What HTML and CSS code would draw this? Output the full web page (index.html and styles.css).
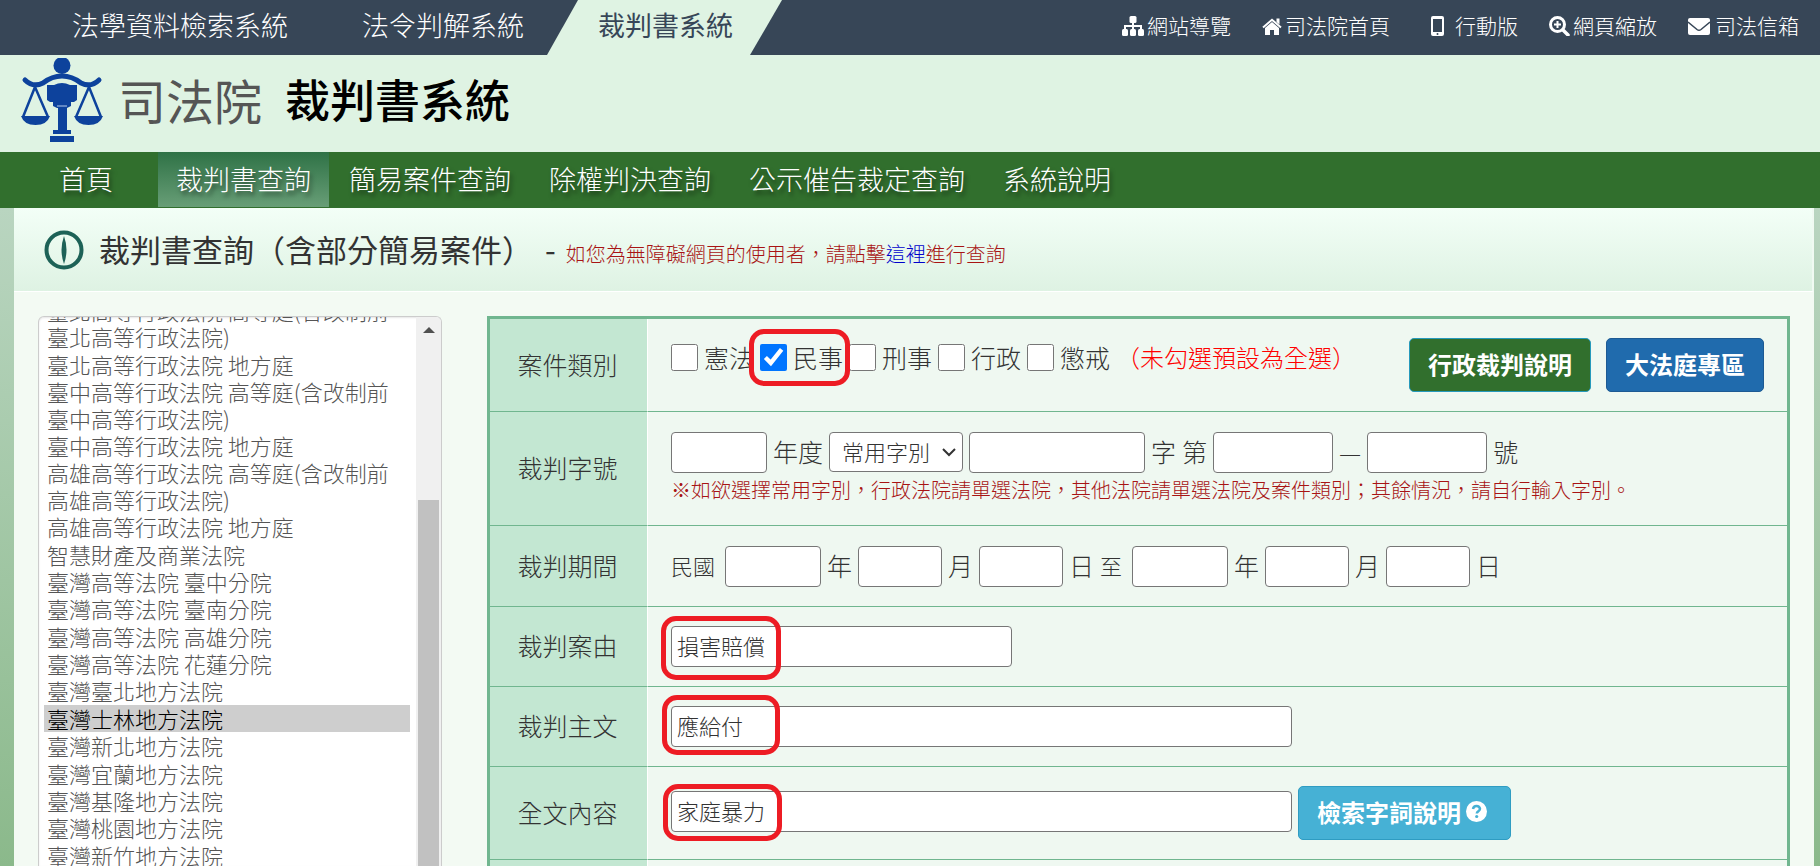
FILE: index.html
```html
<!DOCTYPE html>
<html lang="zh-Hant">
<head>
<meta charset="utf-8">
<title>裁判書系統</title>
<link rel="stylesheet" href="styles.css">
</head>
<body>
<header>
  <div class="topbar">
    <nav class="systems">
      <a href="#">法學資料檢索系統</a>
      <a href="#">法令判解系統</a>
      <a href="#" class="current">裁判書系統</a>
    </nav>
    <nav class="tools">
      <a href="#"><svg width="22" height="20" viewBox="0 0 22 20" fill="#fff"><rect x="7.500" y="0" width="7" height="7" rx="1.500"/><rect x="0" y="13" width="6" height="7" rx="1.500"/><rect x="8" y="13" width="6" height="7" rx="1.500"/><rect x="16" y="13" width="6" height="7" rx="1.500"/><path d="M3 14v-4h16v4M11 6v8" fill="none" stroke="#fff" stroke-width="2"/></svg><span>網站導覽</span></a>
      <a href="#"><svg width="20" height="17" viewBox="0 0 20 17" fill="#fff"><path d="M10 4 17 10v7h-5v-5H8v5H3v-7z"/><path d="M1 9.500 10 1.800l9 7.700" fill="none" stroke="#fff" stroke-width="2"/><path d="M14.500 0.500h3v6l-3-2.500z"/></svg><span>司法院首頁</span></a>
      <a href="#" class="mobile"><svg width="13" height="20" viewBox="0 0 13 20"><path fill="#fff" fill-rule="evenodd" d="M2 0h9a2 2 0 0 1 2 2v16a2 2 0 0 1-2 2H2a2 2 0 0 1-2-2V2a2 2 0 0 1 2-2zM2 3v13h9V3zM6.500 17a1 1 0 1 0 0 2 1 1 0 0 0 0-2z"/></svg><span>行動版</span></a>
      <a href="#"><svg width="21" height="20" viewBox="0 0 21 20" fill="none" stroke="#fff"><circle cx="8.500" cy="8.500" r="7" stroke-width="3"/><path d="M8.500 5v7M5 8.500h7" stroke-width="2"/><path d="m14 14 5 5" stroke-width="3.500" stroke-linecap="round"/></svg><span>網頁縮放</span></a>
      <a href="#" class="mail"><svg width="22" height="17" viewBox="0 0 22 17"><rect width="22" height="17" rx="2" fill="#fff"/><path d="m0 4 9 7.500q2 1.500 4 0L22 4" fill="none" stroke="#374657" stroke-width="1.500"/></svg><span>司法信箱</span></a>
    </nav>
  </div>
  <div class="brand">
    <svg class="emblem" width="82" height="84" viewBox="0 0 82 84" fill="#0d429c">
      <ellipse cx="41" cy="7.500" rx="8.500" ry="8.500"/>
      <path d="M4 22q8 8 18 3Q31 18 41 18t19 7q10 5 18-3" fill="none" stroke="#0d429c" stroke-width="5" stroke-linecap="round"/>
      <path d="M26 27h7q8-4 16 0h7v15l-3 2h-3v4l-4 2H36l-4-2v-4h-3l-3-2z"/>
      <path d="M37 50h9v23h-9zM32 72h18v4H32zM29 78h24v6H29z"/>
      <path d="M36 48h10" stroke="#b5cbea"/>
      <path d="M14 29 2 59M14 29l13 30M68 29 55 59M68 29l12 30" fill="none" stroke="#0d429c" stroke-width="2.500"/>
      <path d="M0 58h29q-3 9-14.500 9T0 58zM53 58h29q-3 9-14.500 9T53 58z"/>
    </svg>
    <span class="court">司法院</span>
    <h1>裁判書系統</h1>
  </div>
  <nav class="menu">
    <a href="#" class="home">首頁</a>
    <a href="#" class="active">裁判書查詢</a>
    <a href="#">簡易案件查詢</a>
    <a href="#">除權判決查詢</a>
    <a href="#">公示催告裁定查詢</a>
    <a href="#">系統說明</a>
  </nav>
</header>
<main>
  <div class="heading">
    <svg width="40" height="40" viewBox="0 0 40 40"><circle cx="20" cy="20" r="17.500" fill="none" stroke="#1d6257" stroke-width="4"/><path d="M20 6q5 14 0 28-5-14 0-28z" fill="#1d6257"/></svg>
    <h2>裁判書查詢（含部分簡易案件）<span>-</span></h2>
    <p>如您為無障礙網頁的使用者，請點擊<a href="#">這裡</a>進行查詢</p>
  </div>
  <div class="content">
    <div class="courts">
      <div class="list" id="courts" role="group" aria-label="法院">
        <label><input type="checkbox">臺北高等行政法院 高等庭(含改制前臺北高等行政法院)</label>
        <label><input type="checkbox">臺北高等行政法院 地方庭</label>
        <label><input type="checkbox">臺中高等行政法院 高等庭(含改制前臺中高等行政法院)</label>
        <label><input type="checkbox">臺中高等行政法院 地方庭</label>
        <label><input type="checkbox">高雄高等行政法院 高等庭(含改制前高雄高等行政法院)</label>
        <label><input type="checkbox">高雄高等行政法院 地方庭</label>
        <label><input type="checkbox">智慧財產及商業法院</label>
        <label><input type="checkbox">臺灣高等法院 臺中分院</label>
        <label><input type="checkbox">臺灣高等法院 臺南分院</label>
        <label><input type="checkbox">臺灣高等法院 高雄分院</label>
        <label><input type="checkbox">臺灣高等法院 花蓮分院</label>
        <label><input type="checkbox">臺灣臺北地方法院</label>
        <label><input type="checkbox" checked>臺灣士林地方法院</label>
        <label><input type="checkbox">臺灣新北地方法院</label>
        <label><input type="checkbox">臺灣宜蘭地方法院</label>
        <label><input type="checkbox">臺灣基隆地方法院</label>
        <label><input type="checkbox">臺灣桃園地方法院</label>
        <label><input type="checkbox">臺灣新竹地方法院</label>
      </div>
      <div class="scrollbar" aria-hidden="true"><i class="arrow"></i><i class="thumb"></i></div>
    </div>
    <form>
      <table class="search">
        <tr>
          <th scope="row">案件類別</th>
          <td>
            <div class="fields kinds">
              <label><input type="checkbox">憲法</label>
              <label><input type="checkbox" checked>民事<i class="ring ring-kind"></i></label>
              <label><input type="checkbox">刑事</label>
              <label><input type="checkbox">行政</label>
              <label><input type="checkbox">懲戒</label>
              <span class="hint">（未勾選預設為全選）</span>
              <span class="actions">
                <button type="button" class="btn green">行政裁判說明</button>
                <button type="button" class="btn blue">大法庭專區</button>
              </span>
            </div>
          </td>
        </tr>
        <tr>
          <th scope="row">裁判字號</th>
          <td>
            <div class="fields multi">
              <input id="year" class="w-year" type="text"><label for="year">年度</label>
              <select class="word" aria-label="常用字別"><option>常用字別</option></select>
              <input id="case" class="w-case" type="text"><label for="case">字</label>
              <label for="no1">第</label><input id="no1" class="w-no" type="text">
              <span>—</span>
              <input id="no2" class="w-no" type="text"><label for="no2">號</label>
            </div>
            <p class="note">※如欲選擇常用字別，行政法院請單選法院，其他法院請單選法院及案件類別；其餘情況，請自行輸入字別。</p>
          </td>
        </tr>
        <tr>
          <th scope="row">裁判期間</th>
          <td>
            <div class="fields multi">
              <span class="small">民國</span>
              <input id="y1" class="w-year" type="text"><label for="y1">年</label>
              <input id="m1" class="w-day" type="text"><label for="m1">月</label>
              <input id="d1" class="w-day" type="text"><label for="d1">日</label>
              <span class="small">至</span>
              <input id="y2" class="w-year" type="text"><label for="y2">年</label>
              <input id="m2" class="w-day" type="text"><label for="m2">月</label>
              <input id="d2" class="w-day" type="text"><label for="d2">日</label>
            </div>
          </td>
        </tr>
        <tr>
          <th scope="row"><label for="cause">裁判案由</label></th>
          <td><div class="fields"><input id="cause" class="w-cause" type="text" value="損害賠償"><i class="ring ring-cause"></i></div></td>
        </tr>
        <tr>
          <th scope="row"><label for="main">裁判主文</label></th>
          <td><div class="fields"><input id="main" class="w-long" type="text" value="應給付"><i class="ring ring-main"></i></div></td>
        </tr>
        <tr>
          <th scope="row"><label for="full">全文內容</label></th>
          <td>
            <div class="fields fulltext">
              <input id="full" class="w-long" type="text" value="家庭暴力"><i class="ring ring-full"></i>
              <button type="button" class="btn cyan">檢索字詞說明<svg width="21" height="21" viewBox="0 0 21 21"><circle cx="10.500" cy="10.500" r="10.500" fill="#fff"/><path d="M7 8q.5-3 3.500-3t3.500 2.800c0 2.500-3.200 2.400-3.200 4.700" fill="none" stroke="#46b1d5" stroke-width="2.500"/><circle cx="10.700" cy="15.500" r="1.600" fill="#46b1d5"/></svg></button>
            </div>
          </td>
        </tr>
        <tr class="next"><th></th><td></td></tr>
      </table>
    </form>
  </div>
</main>
<script src="app.js"></script>
</body>
</html>
```
FILE: app.js
```js
document.getElementById('courts').scrollTop = 20;
```
FILE: styles.css
```css
* { box-sizing: border-box; }
body {
  margin: 0;
  height: 100vh;
  overflow: hidden;
  display: flex;
  flex-direction: column;
  font-family: "Noto Sans CJK TC", sans-serif;
  font-weight: 300;
  color: #333;
}
h1, h2, p { margin: 0; }
a { text-decoration: none; color: inherit; }
input, select, button { font-family: inherit; font-weight: inherit; margin: 0; }
header { flex: none; }

.topbar {
  display: flex;
  justify-content: space-between;
  height: 55px;
  line-height: 50px;
  background: #374657;
  color: #fff;
}
.systems { display: flex; font-size: 27px; padding-left: 72px; }
.systems a + a { margin-left: 74px; }
.systems a.current {
  margin-left: 23px;
  padding: 0 49px 0 51px;
  background: #dff3e3;
  color: #374657;
  font-weight: 400;
  clip-path: polygon(31px 0, 100% 0, calc(100% - 32px) 100%, 0 100%);
}
.tools { display: flex; gap: 31px; font-size: 21px; padding-right: 21px; }
.tools a { display: flex; align-items: center; gap: 3px; height: 52px; }
.tools span { padding-bottom: 2px; }
.tools .mobile { gap: 11px; padding-left: 10px; }
.tools .mail { gap: 5px; }

.brand {
  display: flex;
  align-items: center;
  height: 97px;
  padding-left: 21px;
  background: #dff3e3;
}
.emblem { margin-bottom: 8px; }
.court { margin: 0 23px 0 15px; font-size: 48px; line-height: 80px; font-weight: 400; color: #555; }
h1 { font-size: 45px; line-height: 80px; font-weight: 500; color: #000; }
.court, h1 { padding-bottom: 10px; }

.menu {
  display: flex;
  gap: 2px;
  height: 56px;
  padding: 0 14px 1px;
  line-height: 53px;
  font-size: 27px;
  color: #fff;
  background: #316f2d;
  text-shadow: 2px 4px 4px rgba(0, 0, 0, .5);
}
.menu a { padding: 0 18px; }
.menu .home { padding: 0 43px 0 45px; }
.menu .active { background: linear-gradient(#2f7246, #689e77); }

main {
  flex: 1;
  min-height: 0;
  padding: 0 6px 0 14px;
  display: flex;
  flex-direction: column;
  background: linear-gradient(#b9d5c0, #8bb98b);
}
.heading {
  flex: none;
  display: flex;
  align-items: center;
  height: 84px;
  padding-left: 30px;
  background: linear-gradient(#f3fff7, #def2e3);
  border-right: 2px solid #f0faf2;
  border-bottom: 1px solid #fff;
}
.heading svg { margin-right: 15px; }
h2 { font-size: 31px; line-height: 74px; font-weight: 400; margin-right: 10px; padding-bottom: 2px; }
h2 span { margin-left: 12px; }
.heading p { font-size: 20px; color: #a81414; padding-top: 8px; }
.heading p a { color: #00c; }

.content {
  flex: 1;
  min-height: 0;
  display: flex;
  gap: 45px;
  padding: 24px 24px 0;
  background: #f3faf3;
}
.courts {
  flex: none;
  display: flex;
  width: 404px;
  border: 1px solid #ccc;
  border-bottom: 0;
  border-radius: 6px 6px 0 0;
  background: #fff;
  box-shadow: inset 0 1px 2px rgba(0, 0, 0, .1);
  overflow: hidden;
}
.list {
  position: relative;
  flex: 1;
  min-width: 0;
  padding: 0 6px 0 5px;
  overflow-y: auto;
  scrollbar-width: none;
  font-size: 22px;
  line-height: 1.2;
  color: #555;
}
.list label { display: block; padding: 0 3px 1px; }
.list label:has(:checked) { background: #cecece; color: #000; }
.list input { position: absolute; opacity: 0; }
.scrollbar { display: flex; flex-direction: column; width: 25px; padding: 10px 2px 0; background: #f0f0f0; }
.arrow { align-self: center; border: 6px solid transparent; border-top: 0; border-bottom-color: #505050; }
.thumb { flex: 1; margin-top: 167px; background: #c1c1c1; }

form { flex: 1; min-width: 0; }
.search { width: 100%; border-collapse: separate; border-spacing: 0; border: 3px solid #70b68f; border-bottom: 0; }
.search th {
  width: 158px;
  padding: 0 2px 3px 0;
  font-size: 25px;
  font-weight: 300;
  background: #c3e7d2;
  border-right: 1px solid #fff;
  border-bottom: 1px solid #70b68f;
}
.search td { padding: 19px 23px; background: #eff8f1; border-bottom: 1px solid #70b68f; }
.next td { height: 60px; }
.fields { position: relative; display: flex; align-items: center; gap: 6px; font-size: 25px; line-height: 36px; }
.multi { min-height: 42px; }
.multi label, .multi span { padding-bottom: 2px; }
.fields input[type=text] {
  height: 41px;
  padding: 0 5px 4px;
  border: 1px solid #767676;
  border-radius: 4px;
  background: #fff;
  font-size: 22px;
  color: #333;
}
.fields .w-year { width: 96px; }
.fields .w-case { width: 176px; }
.fields .w-no { width: 120px; }
.fields .w-day { width: 84px; }
.fields .w-cause { width: 341px; }
.fields .w-long { width: 621px; }
.fulltext input { margin-bottom: 3px; }
.word {
  appearance: none;
  width: 134px;
  height: 40px;
  padding: 0 0 2px 12px;
  border: 1px solid #767676;
  border-radius: 4px;
  background: #fff url("data:image/svg+xml,%3Csvg xmlns='http://www.w3.org/2000/svg' width='14' height='9'%3E%3Cpath d='m1 1 6 6 6-6' fill='none' stroke='%23333' stroke-width='2'/%3E%3C/svg%3E") no-repeat right 6px center;
  font-size: 22px;
  color: #333;
}
.small { font-size: 22px; margin-right: 4px; }
.note { font-size: 20px; line-height: 33px; color: #a81414; }

.kinds { gap: 6px; align-items: flex-start; }
.kinds label { position: relative; display: flex; align-items: center; gap: 6px; height: 27px; margin-top: 6px; line-height: 27px; }
.kinds input { width: 27px; height: 27px; }
.hint { margin-top: 1px; font-size: 24px; color: #f00; }
.actions { display: flex; gap: 15px; margin-left: auto; }
.btn {
  display: flex;
  align-items: center;
  gap: 5px;
  height: 54px;
  padding: 0 18px 3px;
  border: 1px solid;
  border-radius: 5px;
  font-size: 24px;
  font-weight: 700;
  color: #fff;
}
.green { background: #316f2d; border-color: #269abc; }
.blue { background: #206bad; border-color: #1d5a93; }
.cyan { background: #46b1d5; border-color: #2f9cc2; padding-right: 23px; }

.ring { position: absolute; z-index: 1; border: 5px solid #ed1c24; border-radius: 15px; pointer-events: none; }
.ring-kind { left: -11px; top: -15px; width: 101px; height: 57px; }
.ring-cause { left: -10px; top: -10px; width: 120px; height: 64px; }
.ring-main { left: -9px; top: -11px; width: 118px; height: 60px; }
.ring-full { left: -8px; top: -2px; width: 119px; height: 57px; }
```
